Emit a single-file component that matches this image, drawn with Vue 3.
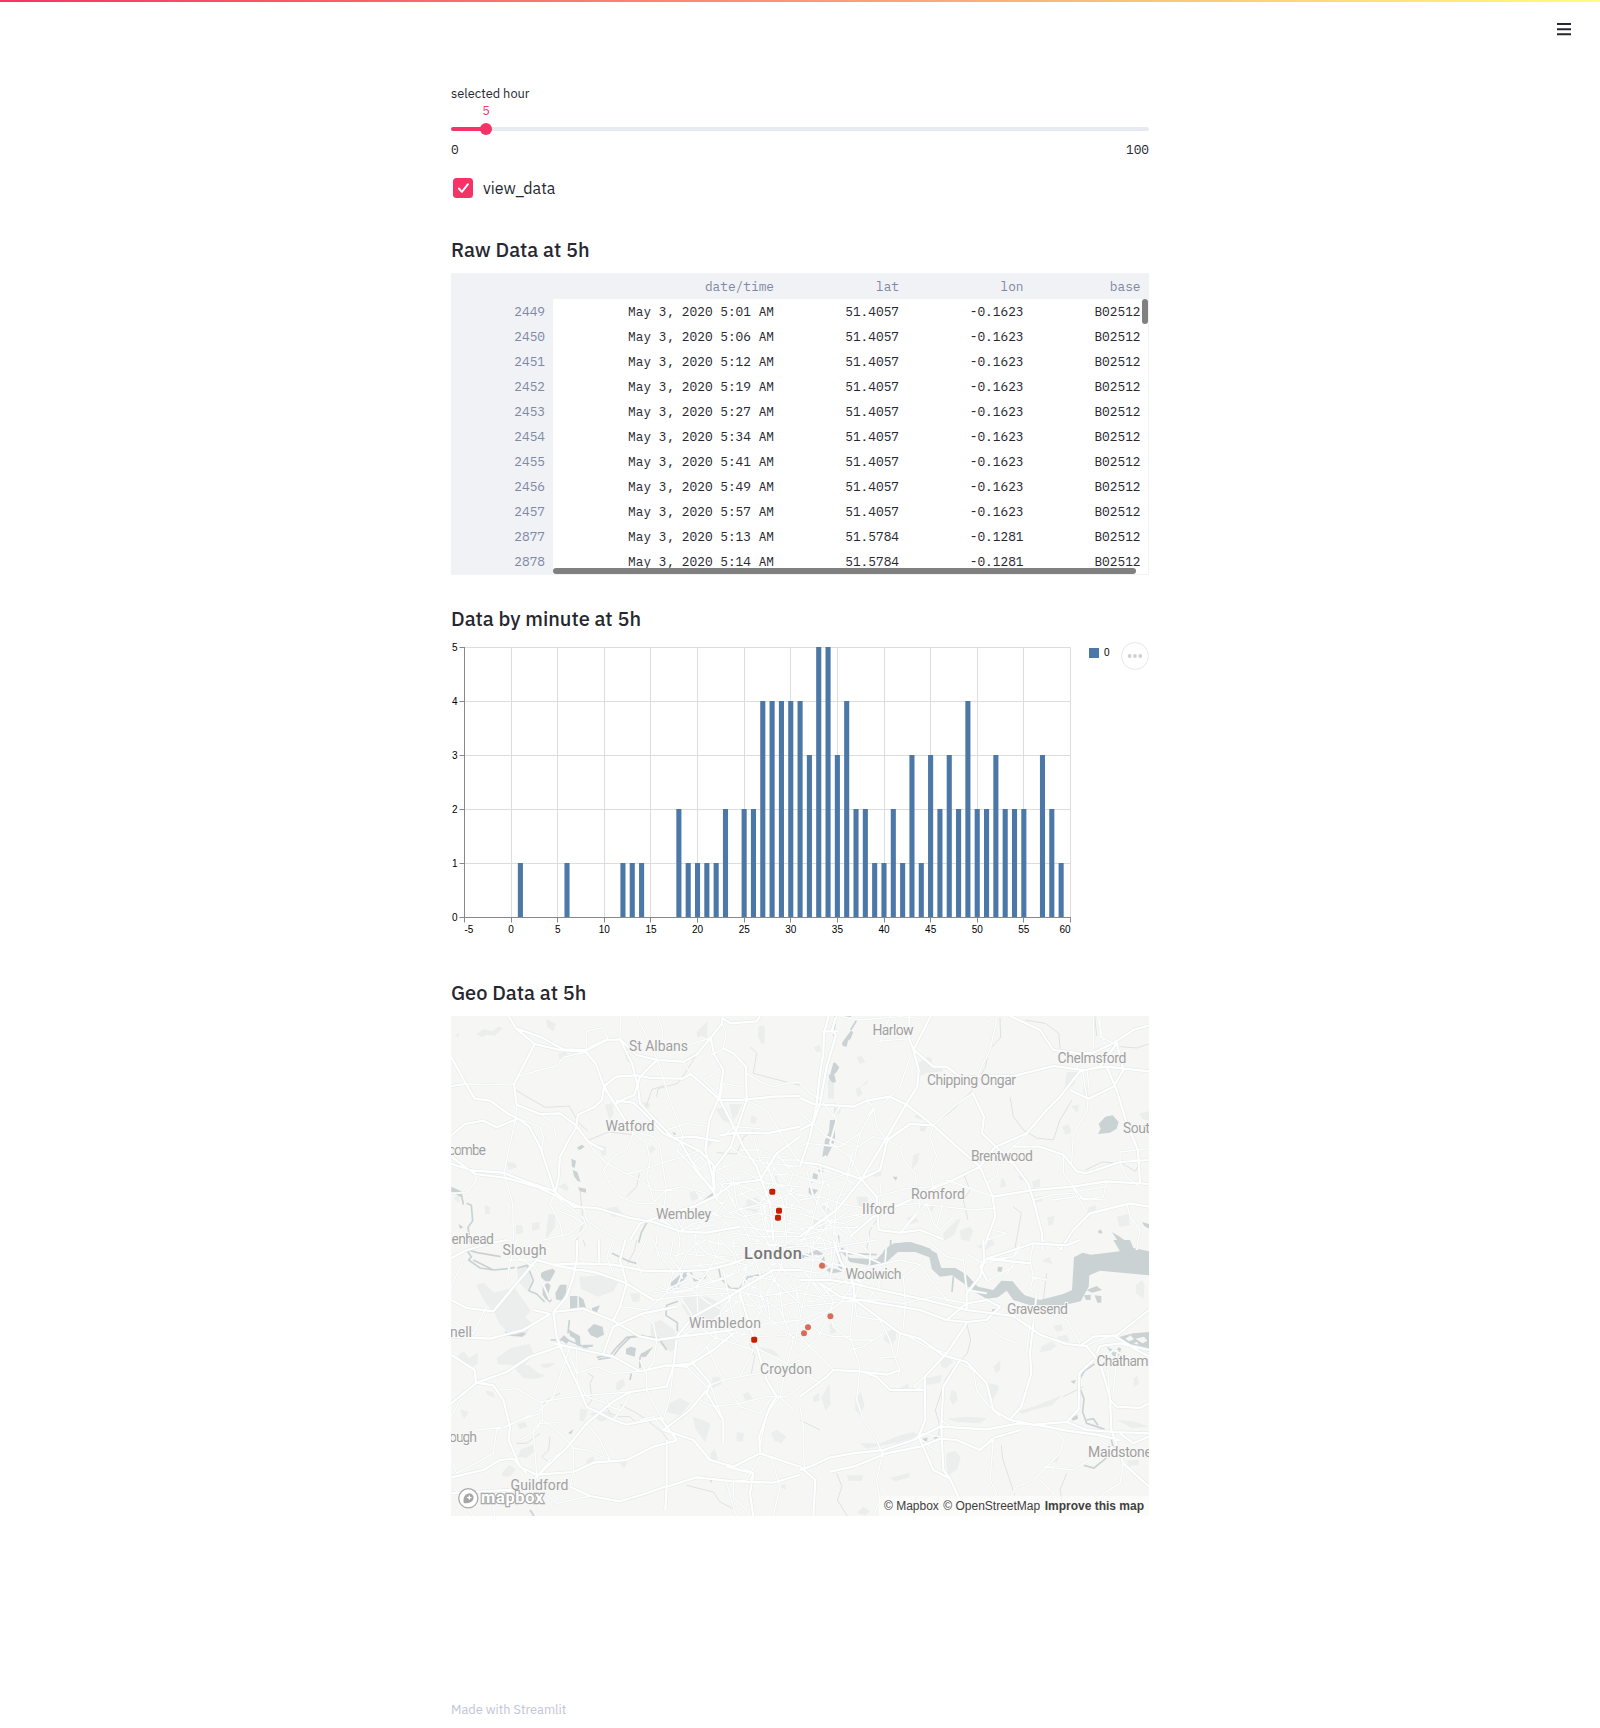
<script setup>
const rows = [
  [2449, '5:01', '51.4057', '-0.1623'],
  [2450, '5:06', '51.4057', '-0.1623'],
  [2451, '5:12', '51.4057', '-0.1623'],
  [2452, '5:19', '51.4057', '-0.1623'],
  [2453, '5:27', '51.4057', '-0.1623'],
  [2454, '5:34', '51.4057', '-0.1623'],
  [2455, '5:41', '51.4057', '-0.1623'],
  [2456, '5:49', '51.4057', '-0.1623'],
  [2457, '5:57', '51.4057', '-0.1623'],
  [2877, '5:13', '51.5784', '-0.1281'],
  [2878, '5:14', '51.5784', '-0.1281']
]

// pickups per minute, index = minute
const counts = [
  0, 1, 0, 0, 0, 0, 1, 0, 0, 0, 0, 0, 1, 1, 1, 0, 0, 0, 2, 1,
  1, 1, 1, 2, 0, 2, 2, 4, 4, 4, 4, 4, 3, 5, 5, 3, 4, 2, 2, 1,
  1, 2, 1, 3, 1, 3, 2, 3, 2, 4, 2, 2, 3, 2, 2, 2, 0, 3, 2, 1
]
const x = (v) => 13.5 + ((v + 5) * 606) / 65
const gx = (v) => Math.floor(x(v)) + 0.5
const y = (v) => 277.5 - v * 54
const bars = counts.map((n, m) => ({ m, n })).filter((b) => b.n)
const xTicks = [-5, 0, 5, 10, 15, 20, 25, 30, 35, 40, 45, 50, 55, 60]
const anchor = (v) => (v === -5 ? 'start' : v === 60 ? 'end' : 'middle')

// four map tiles, each drawn at three units per pixel
const tiles = [
  {
    at: [-11, -46],
    parks:
      'M110 192l20-14 28 6 16-14 14 4-24 24-24-4-14 8zM318 146l14 8 16 8-8 22-18-12zM355 252l20-8 10 12-24 18zM770 185l32-30v50l-20-8-10 6zM956 168h18v54l-12-4-8-20zM495 405l22-6 4 34-12 16-10-30zM552 246l18 8 4 20-12 2zM828 418l30-8 6 34 14 18-30-10zM868 402l38 0-14 30-12 22zM472 524l26 6 0 26-12 0zM622 540l14-14 12 10-14 14zM198 575l26 4 8 12-26 8zM355 650l18-10 14 12-6 12zM134 706l16 4 0 22-14 0zM326 732l20 2 0 36-28 38 2-40zM276 760l22-4 0 22-22 4zM228 766l18-2 4 24-22 6zM920 690l30-8 18 20-20 26-30-10zM990 616l22 0 2 22-20 0zM500 714l30-4 22 24-34 8zM610 396l22 6-14 30-12-20zM935 436l16 8-6 20-14-8zM748 668l26-8 0 28-20 4zM800 504l20 10-14 18zM40 684l18-8 0 24zM44 200l12-12 0 12z',
    water:
      'M412 532l14-8 8 6-14 10-6-2zM394 566l14 6-4 22-8-4zM398 600l14 6 10 30-10-4-10-14zM414 652l24 4v12l-18-4zM670 474l16 4 2 12-14-4zM696 486l12 4-4 6zM790 690l28-22 4 14-30 16zM56 762l14 10-10 4zM34 650l30 14 8 38-8-20-30-16z',
    rivers:
      'M80 700l14 6 4 46-14 20 8 50M648 742l-28 16-16 30-8 30M34 660l30 14 6 30',
    dashed:
      'M228 360l28 18 60 34 72-4 26 48 30 28M446 510l60-24 70 8 M618 410l18-52 40-12 M650 380l4-24 60-16 40-60 30-50M830 548l60 4 20-50 30-20 M560 680l30-30 8-40M420 660l10 100-20 50M930 230l20 20-10 60 60 16 80 20',
    major:
      'M206 138L228 176L284 222L360 240L438 246L468 282L492 350L548 440L580 490M232 176L300 200L370 238L440 240L500 210L540 208L590 255L652 270L730 275L770 254L812 204L846 160L848 138M848 145L872 160L950 154L960 138M284 222L250 288L222 342L230 404L300 432L360 430L408 466L444 515L490 540M34 348L78 342L104 386L150 392L206 432L234 446L268 470L300 530L330 620L350 680M34 496L74 462L130 452L170 472L234 446M34 262L78 342M34 582L100 602L190 608L262 636L340 662L400 710L470 714L570 744L640 756L720 784L800 788L900 770M34 560L104 612L200 624L300 654L360 684L420 710M492 350L486 390L462 412L414 434L408 474L386 510L360 560L356 620L346 668M492 350L528 320L590 316L632 324L728 326L752 312L812 364L840 390L900 390L1000 380L1080 378M528 392L580 398L614 430L670 490L720 514L780 544L820 584L824 660M548 440L526 402L550 388L582 376L600 320L630 290L652 270M540 208L576 280L594 350L600 400L640 444L700 504L760 500L838 514M812 204L822 252L850 300L838 380L808 450L796 540L818 620L824 680M850 235L880 250L918 290L920 390L900 450L872 530L820 600M840 390L874 456L910 530L950 590L990 700L1000 810M838 496L890 488L980 490L1080 470M1080 500L1010 550L960 630L880 640L824 680L760 710L690 730L600 760L570 810M720 514L770 600L824 670',
    minor:
      'M438 240L440 184L490 172L504 206L450 230M540 208L542 138M590 138L620 200L652 270M652 138L668 180L664 240M652 270L690 390L730 500M730 275L752 312M812 204L740 226L680 238M846 160L858 190L850 235L812 256M78 342L140 344L222 342M232 320L300 300L350 288L370 262L438 246M230 404L226 450L206 540L192 610L218 700L220 810M234 446L300 470L310 500L306 540M300 430L340 460L348 500M444 515L460 540L500 580L560 612L610 600L660 580L730 560L780 540M580 490L560 540L520 560L490 600L510 640L540 680L590 700L640 700L680 660L730 650L800 670M580 490L620 520L630 570L620 620L640 690L700 730L730 784M600 490L640 500L660 530L670 600L680 660L670 720L710 770L720 810M730 500L710 540L740 570L780 620L824 660M350 680L430 744L440 770L400 810M430 710L440 750L480 780L540 810M346 668L330 700L360 760L370 810M350 720L400 740L430 760L390 790L310 810M560 610L600 630L640 660L700 662M680 480L740 460L800 470M822 310L790 330L840 380M920 310L970 340L1000 350L1040 340L1080 336M918 390L980 420L1010 470L1040 520L1080 580M840 390L850 340L900 350M850 500L880 470L960 476M900 540L960 540L1030 570L1080 570M872 530L910 560L980 580L1080 590M824 600L880 640L940 660L990 700L1080 720M880 620L890 700L930 760L980 810M824 680L860 720L900 750L930 810M840 640L870 668L850 700L830 690L850 640L880 640M760 580L780 560L800 580L780 600zM720 784L760 760L820 750L890 720L980 700L1080 660M940 500L960 570L1000 620L1030 700L1040 810M980 570L1000 640L960 700L970 760L990 810M1010 550L1060 610L1040 660L1080 700M900 600L980 640L1080 650M870 720L910 740L960 730L1080 760M910 770L970 780L1080 790M880 790L960 800L1080 800M34 670L80 668L110 630L100 600'
  },
  {
    at: [349, -46],
    parks:
      'M168 356l34-16v-10l-22 22 8 20-16 10zM355 280l28-20 14 6-4 24 32 4 6 10-50 4-28 14zM170 262l14-6 12 20-16 6zM42 232l18-8 4 20-14 4zM340 440l20-10 16 12-12 8zM360 466l22 0-8 20-14-4zM800 306l38 0-18 40-28 16zM848 360l14-12 4 32-12 4zM812 408l26-4-6 24zM1018 430l29-6v28l-20-4zM786 470l20-8 8 26-18 6zM340 556l18-8-4 28-18 20zM210 608l34-8 0 18-20 2zM604 624l10 6 6 18-20 6zM655 620l14-12 12 22-20 0zM696 634l24-8 0 24-20 4zM694 684l40-8-8 18-24 4zM742 742l22-4-4 24-14 6zM866 712l20-6 4 12-30 18zM950 740l36-8 4 34-32 4zM320 745l22-10 14 20-26 8zM430 790l40-40 12-4-20 50-30 16zM480 780l30-10 10 14-12 30-26-6zM104 410l20 4-4 16-14 4zM40 750l30-8 4 30-30 10zM60 710l18-6 14 20-20 10zM84 330h18v56H84zM168 680l34 0 4 24-30 4zM564 810l14-8 2 30zM380 712l22-4-4 16z',
    water:
      'M126 218l22-30 4-6 8 4-8 20-8 6-4 18-12-2zM130 138h24l-4 8zM100 278l6 0 12 14-8 14-14 14-6-4zM86 314l18 2 4 20-10 2-10-10zM90 450h15v58l-6 16-18 36h-14l8-50 12-24zM54 592l20 4-4 10-14 0zM40 608l14 6-4 24h-16zM26 650l10 6 18 4-14 18-14-8zM278 620l14 0-4 12zM896 462l20-22 22-4 18 20-6 20-20 12-36 4 8-16zM936 786l20 12 20 14 18 8 4 20h-36l-8-26zM894 784l8-6 6 12h-12zM1026 756l21 6v14l-14-8zM252 840l30-20 50-4 60 20v10H250z',
    rivers: 'M105 138v20l-4 40M170 150l-18 30M115 796l2 30',
    dashed:
      'M600 142l2 60-36 40-10 50-40 70-60 60-40 30M676 150l60 10 40 30 6 60M630 380l10 60 30 40 40 24 50 6 20-60 36-60M884 138l6 60M856 600l50-24 60 4 40 24 10-20M640 710l24 20-20 110M520 600l-30 10 20 50-20 30 14 60M960 230l50 4 36-12M104 400v50M200 840l10-60 20-30',
    major:
      'M0 384L40 402L160 410L200 392L270 380L320 404L400 466L470 530L540 590L578 680L586 740L560 810L550 840M392 138L340 240L356 300L352 350L320 400L262 500L184 628L110 720L40 770L0 800M328 138L328 210L342 240L400 290L440 290L480 320M630 138L720 180L760 240L840 250L880 248L940 220L1000 180L1047 166M480 324L560 318L640 318L760 288L850 300L920 290L1047 304M920 290L950 360L980 460L1014 540L1020 640M950 220L900 290L840 304L780 380L740 420L680 490L584 532L540 590L460 630L380 664L330 690L220 740L150 800M86 138L72 190L70 250L60 310L50 400L30 500L0 590M108 140L96 180L108 196L80 290L60 400L40 460L0 480M68 184h46M518 370L552 440L546 490L640 580L684 640L700 690L726 790L728 840M580 680L700 660L820 650L920 634L1047 642M640 530L720 530L790 554L830 604L860 610L960 576L1047 570M810 360L866 386L940 350L970 300L948 210M780 840L820 780L870 730L990 700L1047 710M0 576L60 584L184 628L240 600L262 510L330 462L400 466M184 628L230 680L236 780L300 788L360 780L430 808',
    minor:
      'M124 140L180 150L240 145L300 140L360 145M230 214L330 206M240 216L270 138M250 400L300 350L330 260M200 392L222 415L180 490L160 580L110 700L100 800M222 415L230 470L260 510L300 530L310 570L346 610L350 660M0 340L30 370L60 385M70 400L110 450L90 520L150 560L184 628M120 410L100 440M0 620L60 640L140 610L184 628M0 690L60 680L120 700L200 716L350 700L430 710L520 720L590 714M0 730L60 750L130 760L180 740L236 720M20 600L40 680L80 740L110 800L120 840M60 584L70 640L50 700L30 780L0 820M30 840L80 770L150 720M10 770L60 780L110 770L170 810L200 840M0 810L50 800L100 820M230 680L320 656L400 650L440 630L540 666L580 680M400 650L390 610L410 560L390 500L400 466M350 660L360 710L340 740L300 788M380 700L400 760L420 780L460 740M430 660L424 720L410 770M684 490L640 530L600 570L590 620L560 640M640 580L590 570M790 554L790 610L820 650L850 690L910 680L920 634M820 654L860 730M830 664L920 650M840 684L910 690M960 576L960 546L1047 536M960 580L980 620L1020 650M980 700L990 740L1020 780L1010 840M864 386L862 420L820 490L815 580M848 306L860 380M862 304L866 350M840 250L830 300M880 240L880 138M900 138L900 200L940 220M892 138L910 210M560 138L590 150L570 240L540 300L520 360M518 370L460 410L400 466M700 690L760 674L820 670M760 690L830 680M578 780L620 790L560 810M260 510L220 500L160 540L140 620M180 490L120 530L20 520L0 530M300 790L380 700M220 415L200 440M0 430L50 470L80 500L150 530M730 810L790 840'
  },
  {
    at: [-11, 224],
    parks:
      'M108 134l24-6 30 30 60-16 30 40 20 30-16 20 20 20-20 36-36 4-20-20-22-20-14-34-28-30zM170 355l40-30 60-14 10 30-26 36-80-4zM225 375l40 0 30 24 22 8-30 10-36-2-24-26zM232 84l32-8 10 50-14 26-26-30zM418 110l60-4 60 14-18 34-46 16-52-24zM732 170l70 0 40 20-2 50-90-4-24-38zM632 250l30-10 42 30 10 50-22 16-30-22-30-24zM690 490l30-16 30 16-30 36-40-10zM758 530l30 10 24 12-16 54-28-36zM240 630l38-16 6 20-26 20-24-4zM55 346l16-12 16 20 26-16 0 34-20 10-40-22zM300 372l46-4-16 14-20 2zM60 508l26 8-12 20-8-10zM136 452l24 4 6 18-22-8zM230 552l26-6 6 14-22 8zM420 506l24 4-12 34-14-2zM530 426l20-10 6 20-20 16-8-6zM440 660l20-12 6 24-26 6zM536 665l30-6-14 26zM188 696l20-20 20 10-18 24-24-2zM818 410l20 0 8 22-32 14zM890 576l22 4-4 26-18-4zM992 580l20-10 26 20-14 20-20-8zM812 640l12-14 10 30-24 12zM908 462l18-6 12 20-22 6zM570 160l30 0-2 24-20 2zM1020 740l14-10 4 20zM448 520l60-6 14 16-40 16zM960 320l40 10 20 20-50-10z',
    water:
      'M304 98l12-6 22-6 8 8-16 30-14 0-14-14zM308 140l14-12 10 8-8 30 12 14-6 8-16-14-6-10zM346 160l14-26 20 0-2 24-12 24-18-4zM390 168l22 0v40l-22 4zM416 168l14 10 8 26-20 6zM456 204l24-8-10 22-14-4zM442 270l20-18 26 8 4 24-20 10-20-8zM558 326l14-6 16 4-4 26-26-8zM606 340l34-20-22 30-12 2zM386 268l16 10 18 10 2 32-12-4-6-20-14-8zM360 298l12-12 16 14-8 12zM194 274l30 10 20-6 14 0-10 12-48-4zM384 580l16-12-6 14zM802 714l14 4v10zM690 130l30-26 18-14 8 10-20 26-16 22-14 6-6-12zM430 314l30 0-2 6-30 4z',
    rivers:
      'M78 28l34 10 70 12M80 30l14 20-8 10 34 24 40 6 44-4 20-4M100 60l60 30M232 84l30-8 18 46-14 30 24 10 24 24M750 92l14 30 30-8 12-26 30-4M836 84l6 30 30 32 26 0 10-14 14-18M920 112l60-12 24-4M520 348l20-26 30-30 40-4 60 10M514 342l16-20 30-30 50-6M714 184l-34 12-2 30 34 22 0 26M600 384l0-30 6-14M470 352l40-8 4 8-40 6M332 300h50l60 24M388 240l-4 40M660 300l20 30M516 40l50 24 24 6M574 400l-4 20M270 810l12 18',
    dashed:
      'M444 400l16 10-10 20 6 50-16 20M500 500l10 20 30 10 30 0 20 20M540 494l48 24 30 20 50 40 20 30M330 590l-4 40-20 20 24 20M230 610l30 0 40-30M740 736l40 10 40 10 20 30 40 20M930 310l14 40-10 50M590 0l-6 30-20 40M430 0l6 20M360 460l-40 20-20 30',
    major:
      'M34 54L80 30L150 10L200 0M34 180L80 204L160 214L230 130L290 60L340 74L420 70L520 74L610 92L700 94L800 90L880 70L960 40M34 490L110 428L200 396L270 350L370 316M34 345L104 390L108 428L160 436L190 480L210 560L206 600L240 680L290 704M340 216L350 290L376 356L420 450L440 500L520 540L560 554L660 534L680 560L710 600M340 216L430 206L520 242L600 290L650 300L720 290L800 280L880 270M710 200L610 220L520 260L490 340M280 210L330 222L250 270L150 296L34 290M340 310L430 330L520 350L600 394L680 376L740 380L820 330L880 280M290 704L400 696L460 668L560 660L640 620L710 602M34 712L130 690L180 660L220 656L260 700M34 760L200 750L300 746M300 700L380 624L440 550L520 484L570 456L680 440L700 380L710 300M800 450L750 510L710 540L670 570L700 580L760 600L810 660L880 680L960 640L1080 680M676 810L680 740L770 712L880 724L1000 728L1080 704M860 680L940 700L930 760L940 828M390 740L450 768L540 784L620 760L680 738M412 0L410 60L400 110L380 170L340 216M476 0L478 70M556 0L540 60L560 130L540 200L520 242M640 180L560 130L470 98L340 76M960 640L958 590L990 500L1010 470L980 420L950 320L930 260L900 160M850 610L850 540L800 460L810 430L760 370L700 376M680 600L680 740M1080 90L1000 90L900 150L840 186L760 230L710 290',
    minor:
      'M200 128L206 90L220 30L230 0M200 60L270 60L290 90L330 180M34 240L100 280L140 200M180 450L230 446L300 486L400 470L470 464L570 456M390 320L370 380L340 470L300 510L200 560L110 570M306 486L308 540L350 570L400 620L400 700L390 740M390 350L410 400L470 380L520 400L600 394M410 330L412 420L440 470L500 490M600 360L620 400L620 450L650 510L670 540M700 380L690 470L670 540M570 460L550 500L520 540M740 380L800 440L850 420L900 410L940 330L880 310L820 290L780 260L720 290M780 480L820 500L900 490L980 470L1040 470L1080 440M810 430L830 490L850 540M750 370L800 320L830 290L820 260L780 250M800 320L850 420L900 500L960 520L990 480M900 410L960 400L1040 380L1080 360M940 320L1040 370L1020 470L1060 510M1020 470L980 520L960 620M880 724L880 770L920 810M994 655L1020 740L1000 828M860 728L880 800L890 828M960 650L920 720L880 724M930 720L940 700L900 680M390 624L440 630L510 660L480 600L440 550M34 530L60 480L110 450M100 828L40 740M34 660L50 700L160 640L170 570L240 540L300 520M240 600L290 570L300 550L350 548M290 704L280 570L308 540M300 700L330 660L380 624M164 828L160 800L270 760L290 704L300 750L350 790L450 768M34 760L150 766L280 740M210 0L230 50L280 80M520 0L500 50L520 100M620 0L590 60L610 120L680 150L740 120M700 0L690 50L720 90L740 40L780 0M640 0L660 50L700 94L680 160M760 0L800 40L860 60L940 80M800 0L830 50L800 100L760 150L700 160M840 0L880 40L900 100L930 140M900 0L940 50L960 100L960 160L980 220M540 200L620 210L680 160L780 140L880 150L960 170L1080 150M600 220L640 250L650 300L640 370L620 390M880 160L840 220L860 270L900 310M900 160L900 220L920 270L980 250L1080 240M920 160L980 230L1040 280L1080 300M960 170L1020 210L1060 300L1040 380M940 110L1000 120L1080 190M960 40L990 90L1020 150L1030 230M980 0L1000 50L1040 100L1080 110M1010 0L1000 40L1080 60M940 10L1080 20M960 50L1080 40M1040 0L1020 90L980 160L990 240M850 90L870 190L890 280M640 180L720 170L860 160M740 100L780 120L770 150M600 540L640 530L670 570M20 170L70 60M500 480L510 500L540 510'
  },
  {
    at: [349, 224],
    parks:
      'M258 276l30-10 0 30-14 20-24-16zM88 252l20 0 6 24-24 6zM375 415l50-10-4 24-44 6zM455 450l14 6 4 24-14 16-10-20zM565 430l32 6-4 20-16 24-14-4zM580 380l22-20-2 30-12 10zM440 640l26-8 16 20-10 36-26 18-8-30zM760 258l24-6 6 18-20 6zM770 290l30-6 10 20-30 0zM724 320l30-16 16 14-20 14-30 4zM166 480l16-24 12 40-14 30-14-16zM38 470l20-12 0 24-18 4zM64 472l24-40 4 60-16 20zM296 446l30-16 0 16-20 6zM1008 134l20-14 6 20-4 36-22-16zM1000 416l12-8 6 24-16 8zM728 60l20-8 10 20-30-8zM750 660l26-12-6 20zM338 780l16-14-4 24zM140 706l50 0-4 16-40 0zM268 714l60-16 0 14-40 12zM170 820l20-20 20 14-14 12zM100 114l30 4-4 16-26-4zM420 360l20-8 20 12-20 20-16-2zM530 20l36-20 20 10-30 20zM440 536l60-6 60 4-20 16-70-4zM656 514l50-16 30-12 50-20-30 30-50 12-40 14zM950 540l50 4 46 16-50 4zM180 610l60 0 60-24 40-10 20 10-60 20-100 20zM980 660l36 0 0 14-30 4z',
    water:
      'M122 32L150 54L230 58L270 16L320 6L370 18L410 40L424 84L466 84L500 104L534 140L580 150L604 122L638 124L670 164L720 180L790 162L816 150L822 52L848 38L872 44L960 34L940 0H990L1000 24L1047 34V106L900 92L868 106L866 140L842 184L790 196L690 196L640 180L620 152L594 172L560 176L528 158L488 128L456 106L420 110L396 88L388 52L340 34L300 30L260 66L220 78L150 66zM960 290l40-10 47-4v60l-40-16-44-12zM860 150l30-12 16 12-30 8zM852 166l20-2 0 16-14 0zM884 166l20 2 0 20-12 0zM920 320l16 8 8 10 12-16 8 4-10 26-14-4zM594 80l14 2-4 14-12-2zM576 208l14-2 0 14-12 0zM358 600l24-8 0 10-20 4zM400 594l20-10 2 10-18 4zM812 424l16-4-6 12zM814 534l18-10 2 12-16 6zM650 140l24 26 20 8-16 6-20-16z',
    islands: 'M976 296l16-10 10 12-14 6zM1006 296l26-6 10 12-14 8zM1000 310l12-4 4 8z',
    wide: 'M0 50l26-4 24-10 16 10 4 30 24 18 26-4 2-26-10-28 20-8',
    rivers:
      'M884 372l-30 20-14 24 0 30 12 30-4 40 12 34 30 10 24 8M860 540l20-4 14 20M940 580l-6 20 8 30-30 30-30 24-30-8M460 110l-4 46M272 0v20M130 40l100 4',
    dashed:
      'M500 250l12 50-10 40-40 40-26 40-30 90 14 50-6 30M604 616l4 40 20 60 16 50M110 700l16 40-14 40 30 48M800 700l-20 50 10 50M850 440l-60 30M740 100l-10 80 40 20M0 540l60 30',
    major:
      'M0 120L90 120L160 130L240 150L380 180L500 210L640 228L720 284L800 312L860 318L900 370L930 470L934 570L970 670L1047 740M100 0L120 60L160 130L164 180L240 236L300 280L360 296L430 346L500 366L560 430L580 510L630 540L700 554L800 546L860 570L940 576L1047 580M0 690L40 676L90 652L160 640L250 630L340 600L420 560L560 568L660 550L720 556L800 572L890 584L960 600M90 695L160 680L260 640L360 620L420 596L470 600L540 630L580 594L660 570M440 240L500 246L560 240L600 200L560 180L500 190L440 240L360 210L240 190L120 170L60 130M500 210L500 160L540 110L552 60L550 0M500 250L440 340L374 410L376 540L356 590L400 690L450 716L476 772M480 360L430 440L424 560L430 690L450 716M700 250L690 340L694 400L664 500L628 540M838 320L880 290L950 286L1047 210M940 286L1010 330L1047 350M1047 330L960 310L900 318L890 340M930 480L950 500L1020 504L1047 490M960 580L1000 610L1047 590M0 470L80 410L100 390L180 394L260 404L300 390M184 394L230 410L270 450L370 450M800 546L836 508L838 400L880 360M0 680L46 720L40 828M690 70L560 56L540 80L560 120M560 56L700 10L800 16L840 0',
    minor:
      'M0 10L60 30L110 20L230 0M0 90L60 100L100 70L170 90L300 60L360 74M0 60L60 60L80 30L70 0M30 0L40 60L30 120L10 180L0 240M60 130L100 180L90 220L100 260L150 300L220 300L250 280M90 120L100 60L110 0M160 130L120 190L60 230L0 260M0 200L90 190L164 180L240 180L310 190L400 170L500 190M0 160L60 170L100 140L160 110L240 100L310 110L360 74L400 130L440 180L500 190M240 150L230 110L190 120L160 180L150 290L180 380L170 480L190 540L230 600L250 650M310 110L316 190L310 260M20 240L60 280L100 290L150 290M0 290L40 330L100 390M0 340L50 300L80 240M164 180L170 230L240 240M240 240L270 300L280 340L300 390L290 420M300 280L290 350L240 354M310 280L380 320L440 340M150 330L190 320L220 300M374 410L340 440L370 450M0 390L60 430M0 500L10 560L10 620L14 690M250 630L230 720L240 780L220 828M360 596L420 640M350 590L370 580L420 590M424 540L450 560M540 630L580 600L570 720L590 760L560 800M476 366L520 390L530 450L560 490L600 530M690 250L680 340M660 10L640 50L560 60M640 70L610 120M700 10L690 60L700 110L690 150L710 160L700 250M690 110L740 120M770 580L790 600L780 640L730 690L700 720L650 740L600 828M730 680L820 690L850 670L940 620M720 720L760 760L740 828M850 320L900 300L940 286M900 370L940 330L1047 380M920 330L930 480M952 330L940 460M550 250L600 290L650 310M730 210L800 240L840 310M970 670L960 730L910 760L900 828M900 600L960 640L1047 650M380 0L440 50L490 60L500 150M500 40L550 70L640 50L660 30M640 80L560 124M500 150L560 160M450 720L490 800'
  }
]

// short streets fanning around the centre of London
const cityStreets = (() => {
  let d = ''
  for (let i = 0; i < 34; i++) {
    const a = (i * Math.PI * 2) / 34
    let r = 8 + (i % 4) * 9
    d += `M${(322 + Math.cos(a) * r * 1.3).toFixed(1)} ${(232 + Math.sin(a) * r).toFixed(1)}`
    for (let k = 1; k < 5; k++) {
      r += 13 + ((i * 7 + k * 5) % 9)
      const b = a + (((i * 5 + k * 11) % 9) - 4) * 0.035
      d += `L${(322 + Math.cos(b) * r * 1.3).toFixed(1)} ${(232 + Math.sin(b) * r).toFixed(1)}`
    }
  }
  for (let k = 1; k < 7; k++) {
    for (let i = 0; i <= 30; i++) {
      const a = (i * Math.PI * 2) / 30
      const r = k * 15 + ((i * 7 + k * 3) % 6) - 3
      const skip = (i * 3 + k * 5) % 8 === 0
      d += `${i === 0 || skip ? 'M' : 'L'}${(322 + Math.cos(a) * r * 1.3).toFixed(1)} ${(232 + Math.sin(a) * r).toFixed(1)}`
    }
  }
  return d
})()

const places = [
  ['St Albans', 178, 34.5, 59],
  ['Watford', 154.5, 115, 49],
  ['combe', -3, 139, 38],
  ['Wembley', 205, 202.5, 55],
  ['enhead', 0.5, 228, 42.5],
  ['Harlow', 421.5, 18.5, 41],
  ['Chelmsford', 606.5, 47, 69],
  ['Chipping Ongar', 476, 68.5, 89],
  ['South', 672, 117, 34],
  ['Brentwood', 520, 145, 62],
  ['Romford', 460, 183, 54],
  ['Ilford', 411, 198, 33],
  ['Slough', 51.5, 238.5, 44],
  ['Woolwich', 394.5, 263, 56],
  ['Gravesend', 556, 297.5, 61],
  ['Wimbledon', 238, 312, 72],
  ['nell', -1, 321, 22],
  ['Croydon', 309, 358, 52],
  ['Chatham', 645.5, 350, 52],
  ['ough', -2, 426, 28],
  ['Maidstone', 637, 440.5, 64],
  ['Guildford', 59.5, 474, 58]
]

const pickups = [
  [321.3, 175.7, 1],
  [328, 194.7, 1],
  [327, 201.7, 1],
  [303.2, 323.7, 1],
  [371, 249.8, 0],
  [379.4, 300.3, 0],
  [357, 311.2, 0],
  [353, 317.2, 0]
]
</script>

<template>
  <div class="page">
    <div class="decoration"></div>
    <header class="toolbar">
      <svg class="menu" width="14" height="13" viewBox="0 0 14 13">
        <path d="M0 1.1h14M0 6.3h14M0 11.3h14" stroke="#262730" stroke-width="2" />
      </svg>
    </header>

    <main class="content">
      <div class="label"><span>selected hour</span></div>
      <div class="slider">
        <div class="value">5</div>
        <div class="track"><i class="fill"></i><i class="thumb"></i></div>
        <div class="range"><span>0</span><span>100</span></div>
      </div>

      <label class="check">
        <svg width="20" height="20" viewBox="0 0 20 20">
          <rect width="20" height="20" rx="3.5" fill="#f63366" />
          <path d="M5.9 10.5l3 3.3 6.1-7.6" fill="none" stroke="#fff" stroke-width="1.9" stroke-linecap="round" stroke-linejoin="round" />
        </svg>
        <span>view_data</span>
      </label>

      <h3 class="first">Raw Data at 5h</h3>
      <div class="table">
        <div class="row head">
          <span></span><span>date/time</span><span>lat</span><span>lon</span><span>base</span>
        </div>
        <div v-for="r in rows" :key="r[0]" class="row">
          <span class="idx">{{ r[0] }}</span>
          <span>May 3, 2020 {{ r[1] }} AM</span>
          <span>{{ r[2] }}</span>
          <span>{{ r[3] }}</span>
          <span>B02512</span>
        </div>
        <i class="scroll-v"></i>
        <i class="scroll-h"></i>
      </div>

      <h3 class="second">Data by minute at 5h</h3>
      <svg class="chart" width="698" height="300" viewBox="0 0 698 300">
        <g stroke="#ddd" fill="none">
          <path v-for="t in xTicks" :key="t" :d="`M${gx(t)} 7.5V277.5`" />
          <path v-for="t in 6" :key="t" :d="`M13.5 ${y(t - 1)}H619.5`" />
        </g>
        <rect v-for="b in bars" :key="b.m" :x="x(b.m) - 2.6" :y="y(b.n) - 0.5" width="5.1" :height="b.n * 54" fill="#4c78a8" />
        <g stroke="#888" fill="none">
          <path d="M13.5 7V278M13 277.5H620" />
          <path v-for="t in xTicks" :key="t" :d="`M${gx(t)} 277.5v5`" />
          <path v-for="t in 6" :key="t" :d="`M13.5 ${y(t - 1)}h-5`" />
        </g>
        <g class="ticks">
          <text v-for="t in xTicks" :key="t" :x="x(t)" y="293" :text-anchor="anchor(t)">{{ t }}</text>
          <text v-for="t in 6" :key="t" x="6.5" :y="y(t - 1) + 3.5" text-anchor="end">{{ t - 1 }}</text>
          <text x="653" y="16">0</text>
        </g>
        <rect x="638" y="8" width="10" height="10" fill="#4c78a8" />
        <circle cx="684" cy="16" r="13.5" fill="#fff" stroke="#e8e8e8" />
        <g fill="#cfcfcf">
          <circle cx="678.7" cy="16" r="1.9" />
          <circle cx="684" cy="16" r="1.9" />
          <circle cx="689.3" cy="16" r="1.9" />
        </g>
      </svg>

      <h3 class="third">Geo Data at 5h</h3>
      <div class="map">
        <svg width="698" height="500" viewBox="0 0 698 500">
          <rect width="698" height="500" fill="#f6f6f5" />
          <g v-for="(t, i) in tiles" :key="i" :transform="`translate(${t.at[0]} ${t.at[1]}) scale(.33333)`">
            <path :d="t.parks" class="park" />
            <path :d="t.dashed" class="boundary" />
            <path :d="t.water" class="water" />
            <path v-if="t.islands" :d="t.islands" fill="#f6f6f5" />
            <path v-if="t.wide" :d="t.wide" class="river wide" />
            <path :d="t.rivers" class="river" />
          </g>
          <path :d="cityStreets" class="city-case" />
          <path :d="cityStreets" class="city" />
          <g v-for="(t, i) in tiles" :key="'r' + i" class="roads" :transform="`translate(${t.at[0]} ${t.at[1]}) scale(.33333)`">
            <path :d="t.minor" stroke="#e9eded" stroke-width="7" />
            <path :d="t.major" stroke="#e7ebeb" stroke-width="10.5" />
            <path :d="t.minor" stroke="#fdfefe" stroke-width="4" />
            <path :d="t.major" stroke="#fff" stroke-width="6.5" />
          </g>
          <g>
            <rect v-for="(p, i) in pickups.filter((q) => q[2])" :key="i" :x="p[0] - 3" :y="p[1] - 3" width="6" height="6" rx="1.6" fill="#c81e00" />
            <circle v-for="(p, i) in pickups.filter((q) => !q[2])" :key="'c' + i" :cx="p[0]" :cy="p[1]" r="3" fill="#da6c57" />
          </g>
          <g class="places">
            <text v-for="p in places" :key="p[0]" :x="p[1]" :y="p[2]" :textLength="p[3]">{{ p[0] }}</text>
            <text class="capital" x="293" y="242.5" textLength="58">London</text>
          </g>
          <g class="logo">
            <circle cx="17.3" cy="482.3" r="9.6" fill="#fff" stroke="#aaa" stroke-width="1.3" />
            <path d="M12.7 487c-.5-4-.2-8.600 5-9.600 4-.4 6.200 4 4 7.200-2 2.800-6 2.800-9 2.400z" fill="#a6a6a6" />
            <path d="M18.300 478.700l.8 2.100 2.100.8-2.100.8-.8 2.100-.8-2.100-2.100-.8 2.100-.8z" fill="#fff" />
            <text x="30" y="487" textLength="62.5">mapbox</text>
          </g>
        </svg>
        <div class="attribution">
          <span>© Mapbox</span><span>© OpenStreetMap</span><b>Improve this map</b>
        </div>
      </div>
      <footer>Made with <span>Streamlit</span></footer>
    </main>
  </div>
</template>

<style>
body {
  margin: 0;
  background: #fff;
}
</style>

<style scoped>
.page {
  height: 1728px;
  overflow: hidden;
  color: #262730;
  font-family: "IBM Plex Sans", Roboto, "Noto Sans", sans-serif;
}
.decoration {
  height: 2px;
  background: linear-gradient(90deg, #f63366, #fffd80);
}
.toolbar {
  height: 82px;
  box-sizing: border-box;
  padding: 21px 29px 0 0;
  display: flex;
  justify-content: flex-end;
}
.content {
  width: 698px;
  margin-left: 451px;
}
.label {
  height: 20px;
  line-height: 20px;
  font-size: 12.8px;
}
.value {
  width: 14px;
  margin-left: 28px;
  height: 14px;
  line-height: 14px;
  margin-bottom: 9px;
  font-size: 12.8px;
  text-align: center;
  color: #f63366;
}
.track {
  position: relative;
  height: 4px;
  border-radius: 2px;
  background: #e6eaf1;
}
.fill {
  display: block;
  width: 5%;
  height: 4px;
  border-radius: 2px;
  background: #f63366;
}
.thumb {
  position: absolute;
  left: 29px;
  top: -4px;
  width: 12px;
  height: 12px;
  border-radius: 50%;
  background: #f63366;
}
.range {
  display: flex;
  justify-content: space-between;
  margin-top: 10px;
  height: 18px;
  line-height: 18px;
  font-family: "IBM Plex Mono", "Liberation Mono", monospace;
  font-size: 12.8px;
}
.check {
  display: flex;
  align-items: center;
  gap: 10px;
  margin: 19px 0 0 2px;
  height: 20px;
  font-size: 16px;
}
h3 {
  height: 30px;
  line-height: 30px;
  margin: 0;
  font-size: 20px;
  font-weight: 500;
}
.first {
  margin: 37px 0 8px;
}
.second {
  margin: 29px 0 6px;
}
.third {
  margin: 38px 0 8px;
}
.table {
  position: relative;
  height: 302px;
  box-sizing: border-box;
  overflow: hidden;
  border-right: 1px solid #f0f2f6;
  border-bottom: 1px solid #f0f2f6;
  font-family: "IBM Plex Mono", "Liberation Mono", monospace;
  font-size: 12.8px;
}
.row {
  display: grid;
  grid-template-columns: 102px 229px 125px 124.5px 117px;
  height: 25px;
  line-height: 25px;
  text-align: right;
}
.row span {
  padding-right: 8px;
}
.row.head {
  height: 26px;
  line-height: 27px;
  width: 698px;
  background: #f0f2f6;
  color: #7f89a3;
}
.row .idx {
  background: #f0f2f6;
  color: #7f89a3;
}
.scroll-v,
.scroll-h {
  position: absolute;
  background: #808080;
  border-radius: 3px;
}
.scroll-v {
  right: 0;
  top: 26px;
  width: 6px;
  height: 25px;
}
.scroll-h {
  left: 102px;
  bottom: 0;
  width: 583px;
  height: 6px;
}
.chart {
  display: block;
}
.ticks {
  font: 10px "Liberation Sans", Arial, sans-serif;
  fill: #000;
}
.map {
  position: relative;
  height: 500px;
  overflow: hidden;
}
.map svg {
  display: block;
}
.park {
  fill: #ebeeed;
}
.water {
  fill: #cad2d3;
}
.boundary {
  fill: none;
  stroke: #dbdddd;
  stroke-width: 2.5;
}
.river {
  fill: none;
  stroke: #cad2d3;
  stroke-width: 5;
}
.river.wide {
  stroke-width: 12;
}
.city-case,
.city,
.roads path {
  fill: none;
  stroke-linejoin: round;
}
.city-case {
  stroke: #e8ecec;
  stroke-width: 1.9;
}
.city {
  stroke: #fdfefe;
  stroke-width: 1.2;
}
.places {
  font: 14px Roboto, "Liberation Sans", sans-serif;
  fill: #a0a0a0;
  stroke: #f8f8f7;
  stroke-width: 2px;
  paint-order: stroke;
}
.places .capital {
  font-size: 16.500px;
  font-weight: 500;
  fill: #777;
}
.logo text {
  font: 700 16.500px Roboto, "Liberation Sans", sans-serif;
  fill: #fff;
  stroke: #aaa;
  stroke-width: 2.4px;
  paint-order: stroke;
}
.attribution {
  position: absolute;
  right: 0;
  bottom: 0;
  width: 270px;
  height: 20px;
  box-sizing: border-box;
  padding: 0 5px;
  display: flex;
  justify-content: space-between;
  background: rgba(255, 255, 255, 0.5);
  color: #404040;
  font: 12px/20px "Liberation Sans", Arial, sans-serif;
  white-space: nowrap;
}
footer {
  margin-top: 184px;
  height: 20px;
  line-height: 20px;
  font-size: 12.8px;
  color: #bfc5d9;
}
</style>
